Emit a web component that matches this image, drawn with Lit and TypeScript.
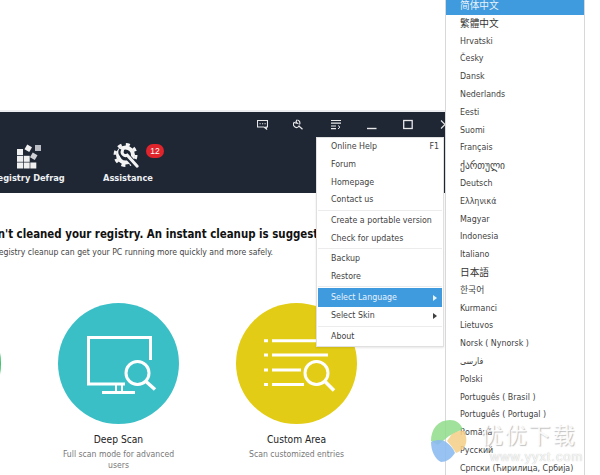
import { LitElement, html, css, svg } from "lit";
import { customElement } from "lit/decorators.js";

const LANGS = ["简体中文","繁體中文","Hrvatski","Česky","Dansk","Nederlands","Eesti","Suomi","Français","ქართული","Deutsch","Ελληνικά","Magyar","Indonesia","Italiano","日本語","한국어","Kurmanci","Lietuvos","Norsk ( Nynorsk )","فارسی","Polski","Português ( Brasil )","Português ( Portugal )","Română","Русский","Српски (Ћирилица, Србија)"];

@customElement("app-root")
export class AppRoot extends LitElement {
  static styles = css`
    :host { display: block; position: relative; width: 600px; height: 475px; overflow: hidden; background: #fff;
      font-family: "DejaVu Sans Condensed", "DejaVu Sans", "Noto Sans CJK SC", sans-serif; font-size: 8.8px; color: #3f3f3f; }
    .window { position: absolute; left: -60px; top: 110px; width: 560px; height: 365px; background: #fff; border-top: 2px solid #eceef1; }
    .bar { height: 81px; background: #1f2735; position: relative; color: #fff; }
    .tool { position: absolute; top: 7px; }
    .tab { position: absolute; top: 31px; width: 90px; display: flex; flex-direction: column; align-items: center; font-weight: 700; font-size: 9.2px; gap: 3px; white-space: nowrap; color: #eef0f2; }
    .tab svg { display: block; }
    .badge { position: absolute; left: 206px; top: 32px; width: 18px; height: 14px; border-radius: 7px; background: #e0242c; color: #fff; font-size: 8.5px; text-align: center; line-height: 14px; font-family: "Liberation Sans", sans-serif; }
    .main { padding: 32px 0 0 5.600px; }
    h1 { margin: 0; font-size: 11.4px; font-weight: 700; color: #111; white-space: nowrap; line-height: 18px; }
    .sub { margin: 3px 0 0 42.400px; color: #444; white-space: nowrap; font-size: 8.6px; line-height: 12px; }
    .cards { display: flex; gap: 57px; margin: 45px 0 0 -65.600px; }
    .card { width: 121px; display: flex; flex-direction: column; align-items: center; text-align: center; }
    .circle { width: 121px; height: 121px; border-radius: 50%; }
    .circle svg { display: block; }
    .title { margin-top: 9px; font-size: 10.2px; color: #222; white-space: nowrap; line-height: 14px; }
    .desc { margin-top: 1.500px; color: #777; font-size: 8.6px; line-height: 11px; width: 122px; }
    .menu { position: absolute; left: 316px; top: 137px; width: 128px; height: 210px; box-sizing: border-box; background: #fff; border: 1px solid #e0e0e0; box-shadow: 0 1px 2px rgba(0,0,0,.1); }
    .mi { height: 17.8px; line-height: 17.8px; padding-left: 14px; display: flex; justify-content: space-between; padding-right: 4px; white-space: nowrap; }
    .mi.active { background: #3f9ade; color: #e8f3fb; margin: 0 1px; padding-left: 13px; padding-right: 3px; height: 19px; line-height: 19px; }
    .sep { height: 1px; background: #ececec; margin: 1px; }
    .sep.tight { margin: .5px 1px; }
    .arrow { width: 0; height: 0; border-left: 4px solid currentColor; border-top: 3px solid transparent; border-bottom: 3px solid transparent; align-self: center; margin-right: 2px; }
    .sub-menu { position: absolute; left: 445px; top: -4px; width: 140px; height: 482px; box-sizing: border-box; background: #fff; border: 1px solid #d8d8d8; }
    .lang { height: 17.8px; line-height: 17.8px; padding-left: 14px; white-space: nowrap; }
    .lang.cjk { font-size: 9.7px; color: #333; }
    .lang.geo { font-size: 10.6px; }
    .lang.active { background: #3f9ade; color: #e8f3fb; }
    .wm { position: absolute; left: 430px; top: 419px; width: 170px; height: 56px; pointer-events: none; }
    .wm svg { position: absolute; left: 0; top: 0; }
    .wm-cn { position: absolute; left: 51px; top: -1px; font-size: 22px; letter-spacing: 1.800px; color: rgba(255,255,255,.9); white-space: nowrap; text-shadow: 1px 1px 1px rgba(150,150,150,.6); line-height: 30px; font-family: "Noto Sans CJK SC", sans-serif; }
    .wm-url { position: absolute; left: 60px; top: 30px; font-size: 13px; letter-spacing: .9px; color: rgba(255,255,255,.9); text-shadow: 0 0 1px rgba(140,140,140,.7); white-space: nowrap; font-family: "Liberation Sans", sans-serif; line-height: 15px; }
  `;

  toolIcons() {
    return html`
      <svg class="tool" style="left:317px" width="11" height="11" viewBox="0 0 11 11" fill="none" stroke="#e8e8e8" stroke-width="1.100"><path d="M.5 1.500h10v6.500H9l.5 2L7 8H.5z"/><path d="M2.500 4.800h1.200M5 4.800h1.200M7.500 4.800h1.200"/></svg>
      <svg class="tool" style="left:353px" width="11" height="11" viewBox="0 0 11 11" fill="none" stroke="#e8e8e8" stroke-width="1.200"><path d="M4 .8l-1 2 1.500 1.500-2-.3L1 3.500a3 3 0 0 0 1 4.500A3 3 0 0 0 6 7l1 1 2.500 2.300"/><path d="M4.500 1a3 3 0 0 1 2 4.500"/></svg>
      <svg class="tool" style="left:391px" width="10" height="11" viewBox="0 0 10 11" fill="none" stroke="#e8e8e8" stroke-width="1.200"><path d="M0 1.500h10M0 4.200h10M0 7h5M0 9.700h5"/><path d="M7 6.500l2 1.700-2 1.700" stroke-width="1"/></svg>
      <svg class="tool" style="left:427px" width="10" height="11" viewBox="0 0 10 11" fill="none" stroke="#e8e8e8" stroke-width="1.400"><path d="M0 9.500h9.500"/></svg>
      <svg class="tool" style="left:463px" width="10" height="11" viewBox="0 0 10 11" fill="none" stroke="#e8e8e8" stroke-width="1.300"><rect x=".7" y="1.500" width="8.500" height="8"/></svg>
      <svg class="tool" style="left:500px" width="10" height="11" viewBox="0 0 10 11" fill="none" stroke="#e8e8e8" stroke-width="1.100"><path d="M1 1.500l8 8M9 1.500l-8 8"/></svg>
    `;
  }

  defrag = svg`<svg width="26" height="26" viewBox="0 0 26 26" fill="#f0f0f0"><rect x="2" y="6" width="6" height="6"/><rect x="2" y="12.800" width="6" height="6"/><rect x="2" y="19.500" width="6" height="6"/><rect x="8.700" y="12.800" width="6" height="6"/><rect x="8.700" y="19.500" width="6" height="6"/><rect x="15.300" y="19.500" width="6" height="6"/><rect x="20" y="2" width="6" height="6" fill="#b9bcc2"/><rect x="10.500" y="2.500" width="5.500" height="5.500" transform="rotate(30 13.250 5.250)"/><rect x="16" y="10.500" width="5.500" height="5.500" fill="#d0d2d6" transform="rotate(30 18.750 13.250)"/></svg>`;

  gear = svg`<svg width="30" height="26" viewBox="0 0 30 26" fill="none"><circle cx="12.500" cy="12" r="7.500" stroke="#f4f4f4" stroke-width="4"/><circle cx="12.500" cy="12" r="10.500" stroke="#f4f4f4" stroke-width="3" stroke-dasharray="4 4.250"/><path d="M9 7a4 4 0 0 0 .8 5 4 4 0 0 0 4 .8l9 10" stroke="#1f2735" stroke-width="6"/><path d="M9.500 7.500a3.500 3.500 0 0 0 4.700 4.700l10 11" stroke="#f4f4f4" stroke-width="3" stroke-linecap="round"/></svg>`;

  monitor = svg`<svg width="121" height="121" viewBox="0 0 121 121" fill="none" stroke="#fff"><path d="M67 81H30.500V34.500H92.500V57" stroke-width="3"/><path d="M58 81v8M64 81v8" stroke-width="2"/><path d="M44 89.500h33" stroke-width="3"/><circle cx="79.500" cy="70" r="11.500" stroke-width="3"/><path d="M88 78.500l9 8" stroke-width="3.500"/></svg>`;

  list = svg`<svg width="121" height="121" viewBox="0 0 121 121" fill="none" stroke="#fff" stroke-width="3"><path d="M28 37.700h4M28 52h4M28 67h4M28 81.500h4"/><path d="M36 37.700h52M36 52h56M36 67h29M36 81.500h32"/><circle cx="80.500" cy="70" r="11.500"/><path d="M89 78.500l9 9" stroke-width="3.500"/></svg>`;

  render() {
    return html`
      <div class="window">
        <div class="bar">
          ${this.toolIcons()}
          <div class="tab" style="left:43px">${this.defrag}<span>Registry Defrag</span></div>
          <div class="tab" style="left:143px">${this.gear}<span>Assistance</span></div>
          <div class="badge">12</div>
        </div>
        <div class="main">
          <h1>You haven't cleaned your registry. An instant cleanup is suggested</h1>
          <div class="sub">A registry cleanup can get your PC running more quickly and more safely.</div>
          <div class="cards">
            <div class="card"><div class="circle" style="background:#3dc26a"></div></div>
            <div class="card"><div class="circle" style="background:#3bbfc6">${this.monitor}</div><div class="title">Deep Scan</div><div class="desc">Full scan mode for advanced users</div></div>
            <div class="card"><div class="circle" style="background:#e2cc16">${this.list}</div><div class="title">Custom Area</div><div class="desc">Scan customized entries</div></div>
          </div>
        </div>
      </div>

      <div class="menu">
        <div class="mi"><span>Online Help</span><span>F1</span></div>
        <div class="mi">Forum</div>
        <div class="mi">Homepage</div>
        <div class="mi">Contact us</div>
        <div class="sep"></div>
        <div class="mi">Create a portable version</div>
        <div class="mi">Check for updates</div>
        <div class="sep tight"></div>
        <div class="mi">Backup</div>
        <div class="mi">Restore</div>
        <div class="sep"></div>
        <div class="mi active"><span>Select Language</span><span class="arrow"></span></div>
        <div class="mi"><span>Select Skin</span><span class="arrow"></span></div>
        <div class="sep"></div>
        <div class="mi">About</div>
      </div>

      <div class="sub-menu">
        ${LANGS.map((l, i) => html`<div class="lang ${i === 0 ? "active" : ""} ${i < 2 || i === 15 ? "cjk" : ""} ${i === 9 ? "geo" : ""}">${l}</div>`)}
      </div>

      <div class="wm">
        <svg width="40" height="44" viewBox="0 0 40 44"><path d="M1 22C1 10 8 1 20 1c6 0 10 3 13 9L19 17 8 26z" fill="#8fdc8a" opacity=".85"/><path d="M22 15c5-3 9-4 12-3 3 6 3 11 1 15-3 4-6 6-9 7-3-5-6-9-9-12z" fill="#f5cf8a" opacity=".88"/><path d="M1 23c7-3 12-2 15 0 4 3 7 6 9 11-4 6-9 9-14 9C5 40 1 32 1 23z" fill="#8ab9f0" opacity=".88"/></svg>
        <div class="wm-cn">优优下载</div>
        <div class="wm-url">www.yyxt.com</div>
      </div>
    `;
  }
}
